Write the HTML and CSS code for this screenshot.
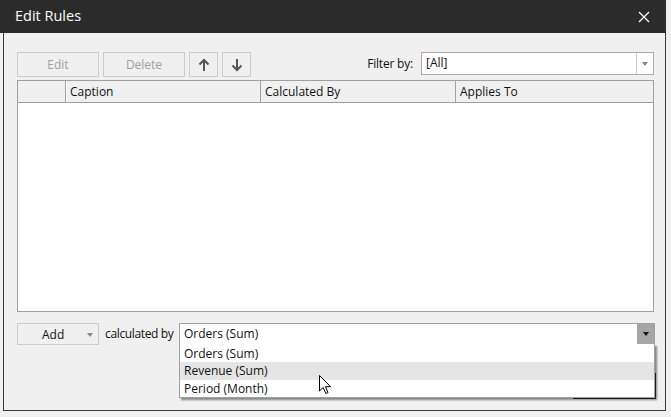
FILE: index.html
```html
<!DOCTYPE html>
<html>
<head>
<meta charset="utf-8">
<link rel="stylesheet" href="styles.css">
</head>
<body>
<div class="titlebar">
  <span class="title">Edit Rules</span>
  <svg class="close" width="12" height="12" viewBox="0 0 12 12"><path d="M1 1 L11 11 M11 1 L1 11" stroke="#fff" stroke-width="1.2" fill="none"/></svg>
</div>
<div class="frame">
  <div class="toolbar">
    <button class="btn wide disabled">Edit</button>
    <button class="btn wide disabled">Delete</button>
    <button class="btn sq"><svg width="12" height="14" viewBox="0 0 12 14"><path d="M6 13 V2 M1.5 6.5 L6 2 L10.5 6.5" stroke="#555" stroke-width="2" fill="none"/></svg></button>
    <button class="btn sq"><svg width="12" height="14" viewBox="0 0 12 14"><path d="M6 1 V12 M1.5 7.5 L6 12 L10.5 7.5" stroke="#555" stroke-width="2" fill="none"/></svg></button>
    <span class="spacer"></span>
    <span class="label">Filter by:</span>
    <div class="combo filter">
      <span class="value">[All]</span>
      <span class="drop"><span class="tri grey"></span></span>
    </div>
  </div>
  <div class="table">
    <div class="thead">
      <div class="th c0"></div>
      <div class="th c1">Caption</div>
      <div class="th c2">Calculated By</div>
      <div class="th c3">Applies To</div>
    </div>
    <div class="tbody"></div>
  </div>
  <div class="bottom">
    <button class="btn add"><span>Add</span><span class="tri grey small"></span></button>
    <span class="label calc">calculated by</span>
    <div class="combo calcby">
      <span class="value">Orders (Sum)</span>
      <span class="drop active"><span class="tri dark"></span></span>
      <div class="list">
        <div class="item">Orders (Sum)</div>
        <div class="item hover">Revenue (Sum)</div>
        <div class="item">Period (Month)</div>
      </div>
      <svg class="cursor" width="14" height="20" viewBox="0 0 14 20"><path d="M0.5 0.5 V16 L4.2 12.5 L6.8 18.5 L9 17.6 L6.5 11.7 L11.5 11.7 Z" fill="#fff" stroke="#000" stroke-width="1" stroke-linejoin="miter"/></svg>
    </div>
    <div class="okbtn"></div>
  </div>
</div>
</body>
</html>
```

FILE: styles.css
```css
html, body {
  margin: 0;
  padding: 0;
  background: #f0f0f0;
  font-family: "Open Sans", "Noto Sans", sans-serif;
  font-size: 12px;
  color: #111;
}
.titlebar {
  width: 666px;
  height: 33px;
  background: #2b2b2b;
  display: flex;
  align-items: center;
  justify-content: space-between;
  box-sizing: border-box;
  padding: 0 16px 0 15px;
}
.title {
  color: #fff;
  font-size: 14.5px;
  line-height: 20px;
  margin-top: -1px;
}
.close { display: block; margin-top: 1px; }
.frame {
  margin-left: 3px;
  width: 663px;
  height: 378px;
  box-sizing: border-box;
  border: 1px solid #3a3a3a;
  border-top: none;
  padding: 19px 0 0 13px;
  position: relative;
}
.toolbar {
  display: flex;
  align-items: flex-start;
  width: 637px;
  height: 25px;
}
.btn {
  font: inherit;
  box-sizing: border-box;
  background: #f0f0f0;
  border: 1px solid #cccccc;
  padding: 0;
  margin: 0 4px 0 0;
  height: 25px;
  color: #111;
  display: flex;
  align-items: center;
  justify-content: center;
}
.btn.wide { width: 82px; }
.btn.sq { width: 29px; }
.btn.disabled { color: #a0a0a0; }
.spacer { flex: 1; }
.label { line-height: 23px; white-space: nowrap; }
.toolbar .label { margin-right: 8px; letter-spacing: -0.2px; }
.combo {
  box-sizing: border-box;
  border: 1px solid #acacac;
  background: #fff;
  height: 23px;
  display: flex;
  align-items: stretch;
  position: relative;
}
.combo .value { flex: 1; padding-left: 4px; line-height: 20px; }
.combo .drop {
  width: 16px;
  border-left: 1px solid #cfcfcf;
  display: flex;
  align-items: center;
  justify-content: center;
}
.combo .drop.active { background: #a6a6a6; border-left-color: #a6a6a6; }
.filter { width: 233px; }
.tri {
  width: 0; height: 0;
  border-left: 3.5px solid transparent;
  border-right: 3.5px solid transparent;
  border-top: 4px solid #777;
}
.tri.dark { border-top-color: #111; }
.tri.grey { border-top-color: #888; }
.table {
  margin-top: 3px;
  width: 637px;
  height: 232px;
  box-sizing: border-box;
  border: 1px solid #a0a0a0;
  display: flex;
  flex-direction: column;
}
.thead {
  display: flex;
  height: 22px;
  box-sizing: border-box;
  border-bottom: 1px solid #a0a0a0;
  background: #f0f0f0;
}
.th {
  box-sizing: border-box;
  line-height: 21px;
  padding-left: 4px;
  white-space: nowrap;
}
.c0 { width: 48px; border-right: 1px solid #a0a0a0; box-shadow: 1px 0 0 #fff; }
.c1 { width: 195px; border-right: 1px solid #a0a0a0; }
.c2 { width: 195px; border-right: 1px solid #a0a0a0; }
.c3 { flex: 1; }
.tbody { flex: 1; background: #fff; }
.bottom {
  margin-top: 11px;
  display: flex;
  align-items: flex-start;
  width: 638px;
  position: relative;
}
.btn.add {
  width: 82px;
  height: 22px;
  position: relative;
  justify-content: flex-start;
  padding-left: 24px;
}
.btn.add .tri { position: absolute; right: 5px; top: 9px; }
.label.calc {
  line-height: 22px;
  margin: 0 5px 0 2px;
  width: 69px;
  letter-spacing: -0.35px;
  overflow: visible;
}
.calcby {
  flex: 1;
  border-color: #a0a0a0;
  border-bottom: 2px solid #a0a0a0;
}
.calcby .value { line-height: 19px; }
.list {
  position: absolute;
  top: 100%;
  left: -1px;
  right: -1px;
  background: #fff;
  border: 1px solid #a0a0a0;
  border-top: none;
  padding-top: 1px;
  box-shadow: 2px 2px 2px rgba(0,0,0,0.45);
  z-index: 2;
}
.item {
  height: 17px;
  line-height: 17px;
  padding-left: 4px;
}
.item.hover { background: #e5e5e5; height: 18px; line-height: 18px; }
.cursor {
  position: absolute;
  left: 139px;
  top: 51px;
  z-index: 3;
}
.okbtn {
  position: absolute;
  right: -1px;
  top: 50px;
  width: 83px;
  height: 26px;
  box-sizing: border-box;
  border: 1px solid #333;
  background: #e1e1e1;
  z-index: 1;
}
```
